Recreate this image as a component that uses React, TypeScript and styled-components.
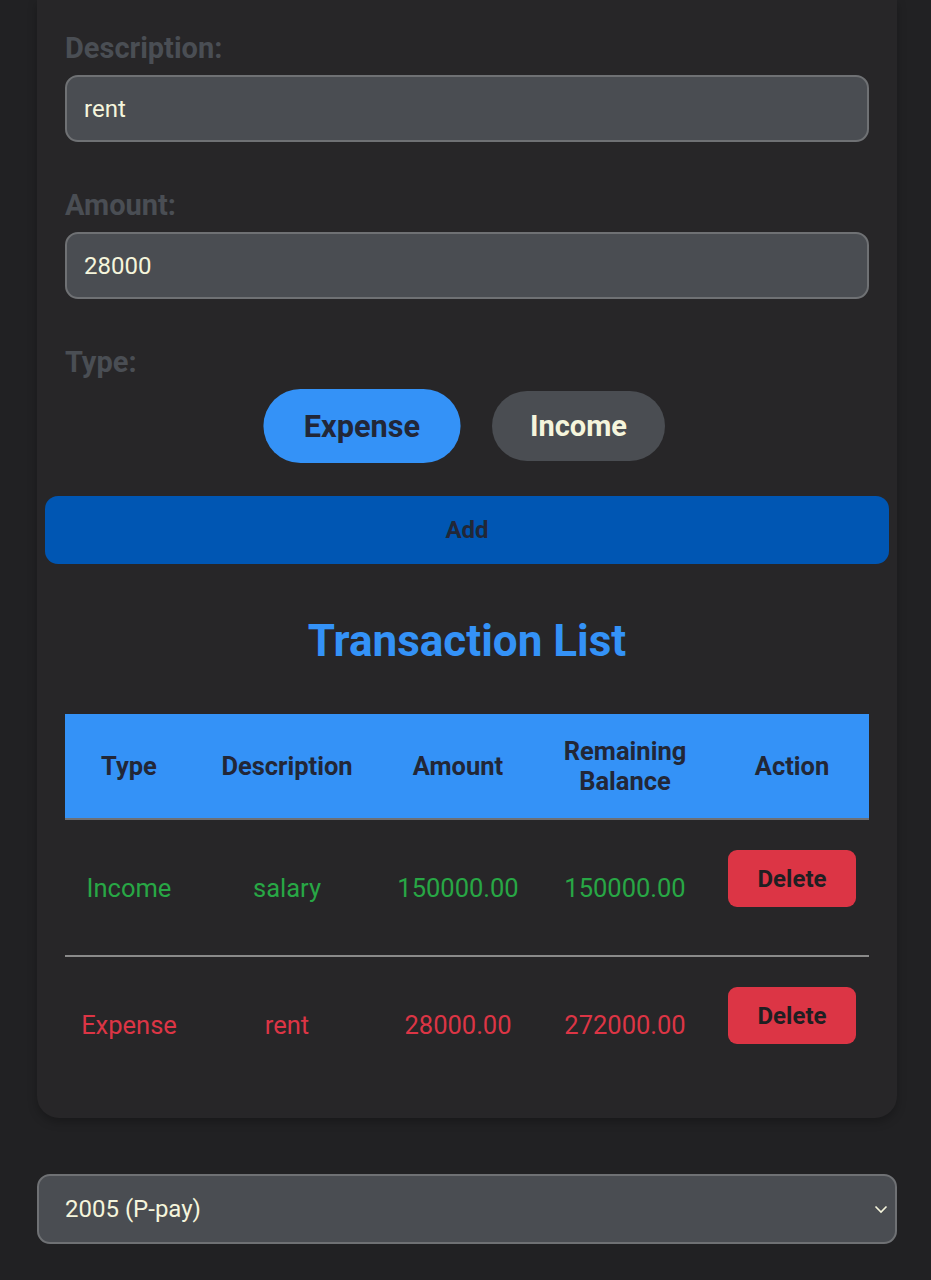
import React, { useState } from 'react';
import styled, { createGlobalStyle } from 'styled-components';

type Kind = 'Expense' | 'Income';

interface Transaction {
  id: number;
  type: Kind;
  description: string;
  amount: number;
  balance: number;
}

const transactions: Transaction[] = [
  { id: 1, type: 'Income', description: 'salary', amount: 150000, balance: 150000 },
  { id: 2, type: 'Expense', description: 'rent', amount: 28000, balance: 272000 },
];

// column widths of the transaction table, in px
const columns = [128, 188, 154, 180, 154];

export default function App() {
  const [type, setType] = useState<Kind>('Expense');
  const [description, setDescription] = useState('rent');
  const [amount, setAmount] = useState('28000');

  return (
    <Page>
      <GlobalStyle />
      <Card>
        <FormGroup>
          <Label>Description:</Label>
          <Input value={description} onChange={(e) => setDescription(e.target.value)} />
        </FormGroup>
        <FormGroup>
          <Label>Amount:</Label>
          <Input value={amount} onChange={(e) => setAmount(e.target.value)} />
        </FormGroup>
        <FormGroup>
          <Label>Type:</Label>
          <ToggleRow>
            <ToggleButton active={type === 'Expense'} onClick={() => setType('Expense')}>
              Expense
            </ToggleButton>
            <ToggleButton active={type === 'Income'} onClick={() => setType('Income')}>
              Income
            </ToggleButton>
          </ToggleRow>
        </FormGroup>
        <AddButton>Add</AddButton>

        <Heading>Transaction List</Heading>
        <TableWrap>
          <Table>
            <colgroup>
              {columns.map((w, i) => (
                <col key={i} style={{ width: w }} />
              ))}
            </colgroup>
            <thead>
              <tr>
                <Th>Type</Th>
                <Th>Description</Th>
                <Th>Amount</Th>
                <Th>
                  Remaining
                  <br />
                  Balance
                </Th>
                <Th>Action</Th>
              </tr>
            </thead>
            <tbody>
              {transactions.map((t) => (
                <Row key={t.id}>
                  <Td kind={t.type}>{t.type}</Td>
                  <Td kind={t.type}>{t.description}</Td>
                  <Td kind={t.type}>{t.amount.toFixed(2)}</Td>
                  <Td kind={t.type}>{t.balance.toFixed(2)}</Td>
                  <Td>
                    <DeleteButton>Delete</DeleteButton>
                  </Td>
                </Row>
              ))}
            </tbody>
          </Table>
        </TableWrap>
      </Card>

      <SelectWrap>
        <Select defaultValue="2005">
          <option value="2005">2005 (P-pay)</option>
        </Select>
        <Chevron width="14" height="9" viewBox="0 0 14 9">
          <path d="M1.5 1.5 L7 7 L12.5 1.5" fill="none" stroke="#f5f5dc" strokeWidth="1.6" />
        </Chevron>
      </SelectWrap>
    </Page>
  );
}

const GlobalStyle = createGlobalStyle`
  body {
    margin: 0;
    background: #212123;
    font-family: Roboto, "Liberation Sans", sans-serif;
  }
`;

const Page = styled.div`
  width: 860px;
  margin-left: 37px;
  padding-bottom: 35px;
`;

const Card = styled.div`
  background: #272628;
  border-radius: 0 0 22px 22px;
  padding: 31px 8px 26px;
  box-shadow: 0 4px 10px rgba(0, 0, 0, 0.25);
`;

const FormGroup = styled.div`
  padding: 0 20px;
  margin-bottom: 46px;

  &:nth-child(3) {
    margin-bottom: 33px;
  }
`;

const Label = styled.label`
  display: block;
  font-size: 29px;
  font-weight: 700;
  line-height: 34px;
  color: #4a4e54;
  margin-bottom: 10px;
`;

const Input = styled.input`
  display: block;
  box-sizing: border-box;
  width: 100%;
  height: 67px;
  padding: 0 17px;
  background: #4a4d52;
  border: 2px solid #6f7174;
  border-radius: 13px;
  color: #f5f5dc;
  font-family: inherit;
  font-size: 24px;
  outline: none;
`;

const ToggleRow = styled.div`
  display: flex;
  justify-content: center;
  align-items: center;
  gap: 37px;
  margin-top: 3px;
  height: 74px;
`;

const ToggleButton = styled.button<{ active: boolean }>`
  height: 70px;
  padding: 0 38px;
  border: none;
  border-radius: 35px;
  font-family: inherit;
  font-size: 29px;
  font-weight: 700;
  cursor: pointer;
  background: ${(p) => (p.active ? '#3492f7' : '#4a4d52')};
  color: ${(p) => (p.active ? '#222737' : '#f5f5dc')};
  transform: ${(p) => (p.active ? 'scale(1.06)' : 'none')};
`;

const AddButton = styled.button`
  display: block;
  width: 100%;
  height: 68px;
  border: none;
  border-radius: 13px;
  background: #0056b3;
  color: #222737;
  font-family: inherit;
  font-size: 24px;
  font-weight: 700;
  cursor: pointer;
`;

const Heading = styled.h2`
  margin: 52px 0 48px;
  text-align: center;
  font-size: 44px;
  line-height: 50px;
  font-weight: 700;
  color: #3492f7;
`;

const TableWrap = styled.div`
  padding: 0 20px;
`;

const Table = styled.table`
  width: 100%;
  table-layout: fixed;
  border-collapse: collapse;
  text-align: center;
`;

const Th = styled.th`
  background: #3492f7;
  color: #222737;
  font-size: 25.5px;
  font-weight: 700;
  line-height: 30px;
  padding: 22px 0;
  border-bottom: 2px solid #6d7075;
`;

const Row = styled.tr`
  border-bottom: 2px solid #8a8a8a;

  &:last-child {
    border-bottom: none;
  }
`;

const Td = styled.td<{ kind?: Kind }>`
  padding: 30px 0;
  font-size: 25.5px;
  vertical-align: middle;
  color: ${(p) => (p.kind === 'Income' ? '#28a745' : '#dc3545')};
`;

const DeleteButton = styled.button`
  display: block;
  margin: 0 auto 18px;
  width: 128px;
  height: 57px;
  border: none;
  border-radius: 9px;
  background: #dc3545;
  color: #1f1f22;
  font-family: inherit;
  font-size: 24px;
  font-weight: 700;
  cursor: pointer;
`;

const SelectWrap = styled.div`
  position: relative;
  margin-top: 56px;
`;

const Select = styled.select`
  display: block;
  box-sizing: border-box;
  width: 100%;
  height: 70px;
  padding: 0 26px;
  background: #4a4d52;
  border: 2px solid #6f7174;
  border-radius: 13px;
  color: #f5f5dc;
  font-family: inherit;
  font-size: 24px;
  appearance: none;
  outline: none;
`;

const Chevron = styled.svg`
  position: absolute;
  right: 9px;
  top: 31px;
  pointer-events: none;
`;
